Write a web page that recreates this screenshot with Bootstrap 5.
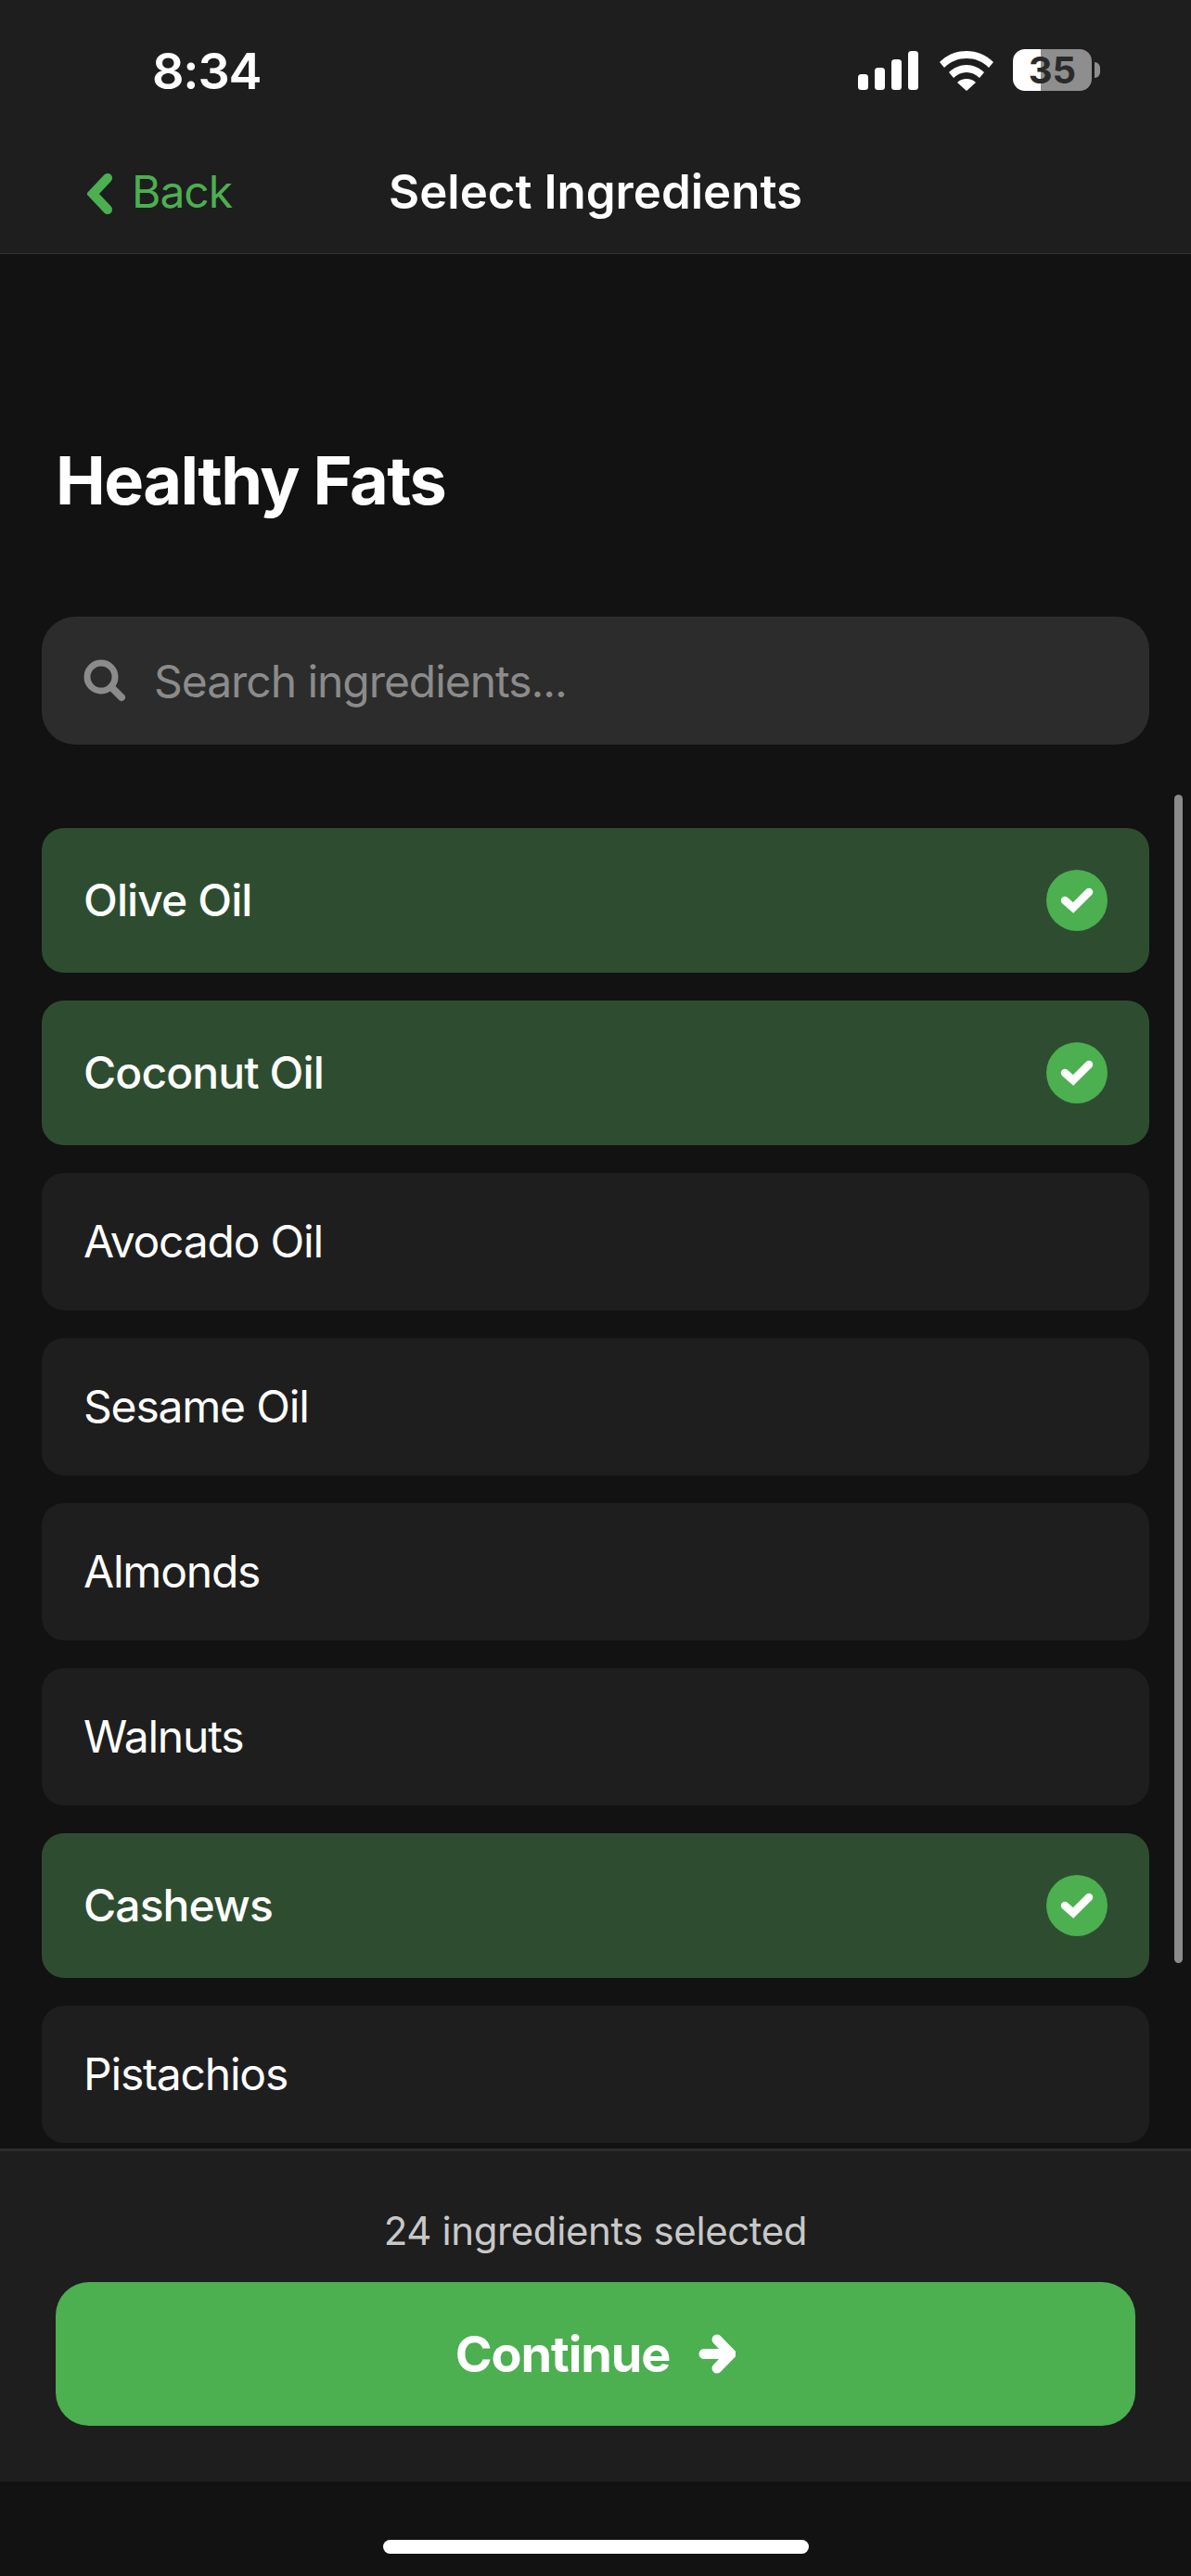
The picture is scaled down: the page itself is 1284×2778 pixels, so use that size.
<!DOCTYPE html>
<html lang="en">
<head>
<meta charset="utf-8">
<title>Select Ingredients</title>
<link href="https://cdn.jsdelivr.net/npm/bootstrap@5.3.3/dist/css/bootstrap.min.css" rel="stylesheet">
<script src="https://cdn.jsdelivr.net/npm/bootstrap@5.3.3/dist/js/bootstrap.bundle.min.js"></script>
<style>
  html, body { height: 2778px; overflow: hidden; }
  body { background: #121212; color: #fff; font-family: "Inter", "Liberation Sans", sans-serif; }

  .screen { height: 2778px; position: relative; }

  /* top bars */
  .top-area { background: #1e1e1e; height: 274px; border-bottom: 1px solid #333; }
  .status-row { height: 145px; padding: 42px 107px 0 164px; }
  .clock { font-size: 54px; font-weight: 600; line-height: 70px; width: 116px; letter-spacing: -1.2px; }
  .status-icons { gap: 23px; padding-top: 11px; }
  .batt { width: 85px; height: 45px; border-radius: 13px; background: linear-gradient(90deg, #fff 30px, #8e8e8e 30px); color: #2a2a2a; font-size: 40px; font-weight: 700; line-height: 45px; text-align: center; position: relative; }
  .batt::after { content: ""; position: absolute; left: 88px; top: 14px; width: 6px; height: 17px; background: #8e8e8e; border-radius: 0 8px 8px 0; }
  .sig-icon, .wifi-icon { margin-top: 2px; }
  .wifi-icon { margin-right: -2px; }
  .head-row { height: 128px; padding: 0 0 0 94px; position: relative; }
  .back-link { color: #4caf50; font-size: 48px; gap: 20px; text-decoration: none; letter-spacing: -1px; }
  .back-link span { margin-top: -4px; }
  .head-title { position: absolute; left: 0; right: 0; top: 31px; text-align: center; font-size: 51px; font-weight: 600; line-height: 62px; margin: 0; }

  /* category */
  .cat-title { font-size: 72px; font-weight: 700; line-height: 88px; margin: 0; padding: 200px 0 0 60px; letter-spacing: -1.6px; }
  .search-wrap { margin: 103px 45px 0; height: 138px; background: #2c2c2c; border-radius: 36px; padding-left: 45px; }
  .search-input.form-control { background: transparent; border: 0; box-shadow: none; color: #fff; font-size: 48px; padding: 0 0 0 30px; height: 100%; letter-spacing: -1.05px; }
  .search-input.form-control::placeholder { color: #8b8b8b; opacity: 1; }

  /* list */
  .list-clip { position: absolute; left: 0; right: 0; top: 893px; height: 1424px; overflow: hidden; }
  .ing-list { gap: 30px; padding: 0 45px; border-radius: 0; }
  .ing-list .list-group-item { background: #1e1e1e; color: #fff; border: 0; border-radius: 24px; height: 148px; padding: 0 45px; font-size: 48px; letter-spacing: -1.2px; }
  .ing-list .list-group-item.picked { background: #2e4d30; height: 156px; font-weight: 500; letter-spacing: -0.9px; }
  .tick { width: 66px; height: 66px; border-radius: 50%; background: #4caf50; }
  .scroll-thumb { position: absolute; left: 1266px; top: 857px; width: 9px; height: 1260px; border-radius: 5px; background: #8b8b8b; }

  /* footer */
  .bottom-bar { position: absolute; left: 0; right: 0; top: 2317px; height: 359px; background: #1e1e1e; border-top: 3px solid #2c2c2c; }
  .sel-count { color: #c8c8c8; font-size: 42px; line-height: 52px; margin: 60px 0 0; text-align: center; letter-spacing: -0.4px; }
  .go-btn.btn { background: #4caf50; border: 0; color: #fff; font-size: 54px; font-weight: 700; border-radius: 36px; height: 155px; width: 1164px; margin: 29px 0 0 60px; gap: 31px; letter-spacing: -1.1px; }
  .home-bar { position: absolute; left: 413px; top: 2739px; width: 459px; height: 15px; border-radius: 8px; background: #fff; }
</style>
</head>
<body>
<div class="screen">

  <div class="top-area">
    <div class="status-row d-flex justify-content-between">
      <div class="clock">8:34</div>
      <div class="status-icons d-flex align-items-start">
        <svg class="sig-icon" width="65" height="42" viewBox="0 0 65 42"><g fill="#fff"><rect x="0" y="25" width="11" height="17" rx="3.5"/><rect x="18" y="18" width="11" height="24" rx="3.5"/><rect x="36" y="9" width="11" height="33" rx="3.5"/><rect x="54" y="0" width="11" height="42" rx="3.5"/></g></svg>
        <svg class="wifi-icon" width="58" height="43" viewBox="0 0 58 43"><path fill="#fff" d="M29 0C18 0 8 4 0 12l5 6C12 11 20 8 29 8s17 3 24 10l5-6C50 4 40 0 29 0zM29 15c-7 0-14 3-19 8l5 6c4-4 9-6 14-6s10 2 14 6l5-6c-5-5-12-8-19-8zM29 30c-4 0-7 1-10 4l10 9 10-9c-3-3-6-4-10-4z"/></svg>
        <div class="batt">35</div>
      </div>
    </div>
    <div class="head-row d-flex align-items-center">
      <a class="back-link d-flex align-items-center" href="#">
        <svg width="28" height="44" viewBox="0 0 28 44"><path d="M22 5 6 22l16 17" fill="none" stroke="#4caf50" stroke-width="10" stroke-linecap="round" stroke-linejoin="miter"/></svg>
        <span>Back</span>
      </a>
      <h1 class="head-title">Select Ingredients</h1>
    </div>
  </div>

  <h2 class="cat-title">Healthy Fats</h2>

  <div class="search-wrap d-flex align-items-center">
    <svg width="46" height="46" viewBox="0 0 46 46" class="flex-shrink-0"><circle cx="19" cy="19" r="15" fill="none" stroke="#8b8b8b" stroke-width="7"/><path d="M30 30 41 41" stroke="#8b8b8b" stroke-width="8" stroke-linecap="round"/></svg>
    <input class="form-control search-input" type="text" placeholder="Search ingredients...">
  </div>

  <div class="list-clip">
    <ul class="list-group ing-list" id="ingList"></ul>
  </div>
  <div class="scroll-thumb"></div>

  <div class="bottom-bar">
    <p class="sel-count">24 ingredients selected</p>
    <button class="btn go-btn d-flex align-items-center justify-content-center" type="button">
      <span>Continue</span>
      <svg width="40" height="43" viewBox="0 0 40 43"><path d="M6 21.5H32M20 6 35 21.5 20 37" fill="none" stroke="#fff" stroke-width="11" stroke-linecap="round" stroke-linejoin="miter"/></svg>
    </button>
  </div>

  <div class="home-bar"></div>
</div>

<script>
  const ingredients = [
    { name: "Olive Oil", picked: true },
    { name: "Coconut Oil", picked: true },
    { name: "Avocado Oil", picked: false },
    { name: "Sesame Oil", picked: false },
    { name: "Almonds", picked: false },
    { name: "Walnuts", picked: false },
    { name: "Cashews", picked: true },
    { name: "Pistachios", picked: false }
  ]

  const tickIcon = '<span class="tick d-flex align-items-center justify-content-center"><svg width="36" height="28" viewBox="0 0 36 28"><path d="M5 14 14 22 31 5" fill="none" stroke="#fff" stroke-width="8.5" stroke-linecap="round" stroke-linejoin="miter"/></svg></span>'

  const ingList = document.querySelector('#ingList')
  for (let i = 0; i < ingredients.length; i++) {
    const li = document.createElement('li')
    li.className = 'list-group-item d-flex align-items-center justify-content-between'
    if (ingredients[i].picked) li.classList.add('picked')
    li.innerHTML = `<span>${ingredients[i].name}</span>` + (ingredients[i].picked ? tickIcon : '')
    ingList.appendChild(li)
  }
</script>
</body>
</html>
